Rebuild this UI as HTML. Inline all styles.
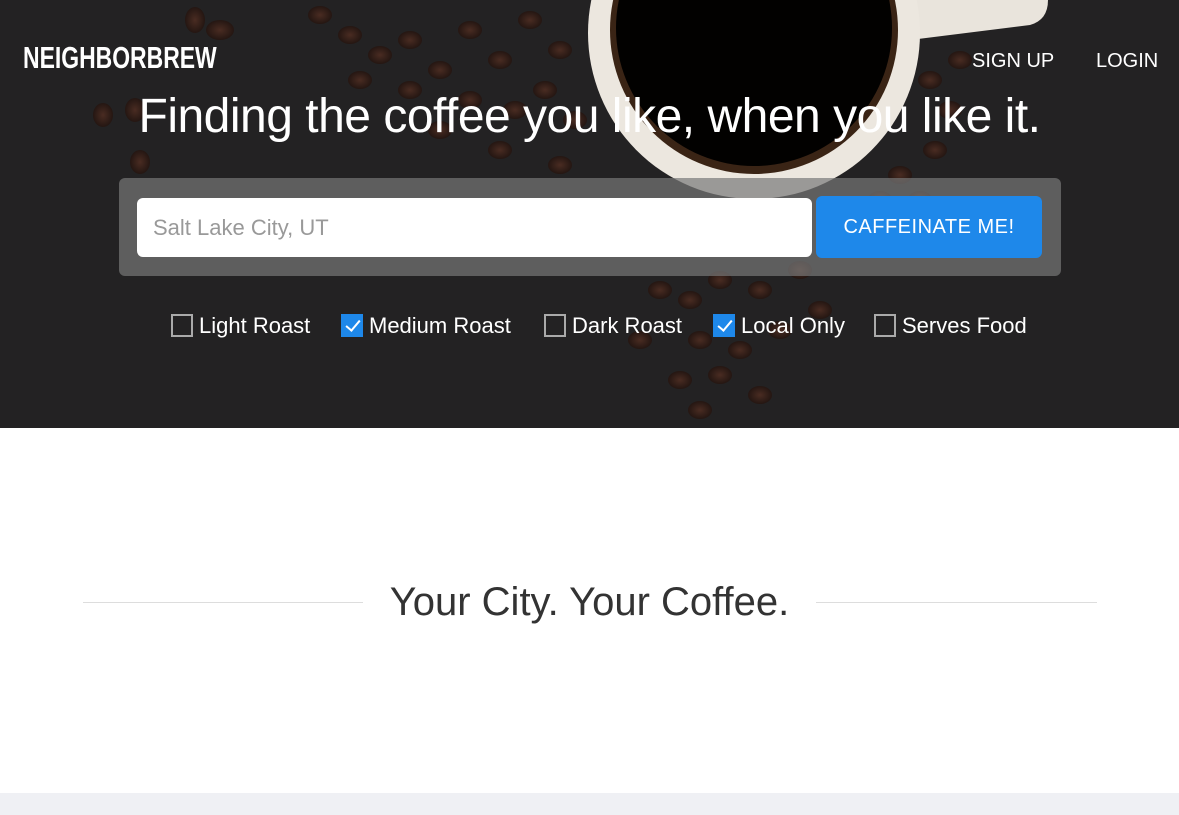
<!DOCTYPE html>
<html><head><meta charset="utf-8"><style>
*{margin:0;padding:0;box-sizing:border-box}
body{width:1179px;height:815px;overflow:hidden;background:#fff;font-family:"Liberation Sans",sans-serif;position:relative}
.hero{position:absolute;left:0;top:0;width:1179px;height:428px;background:#232223;overflow:hidden}
.logo{position:absolute;left:23px;top:40px;color:#fff;font:bold 31px "Liberation Sans Narrow","Liberation Sans",sans-serif;transform:scaleX(.74);transform-origin:left}
.nav{position:absolute;top:50px;color:#fff;font-size:20px}
h1{position:absolute;left:0;width:1179px;top:89px;text-align:center;color:#fff;font-weight:normal;font-size:48px;letter-spacing:-.5px}
.box{position:absolute;left:119px;top:178px;width:942px;height:98px;background:rgba(120,120,120,.7);border-radius:6px}
.inp{position:absolute;left:137px;top:198px;width:675px;height:59px;background:#fff;border-radius:6px;color:#999;font-size:22px;padding:17px 16px;font-weight:300}
.btn{position:absolute;left:816px;top:196px;width:226px;height:62px;background:#1e88ea;border-radius:6px;color:#fff;font-size:20px;text-align:center;line-height:62px;letter-spacing:.5px}
.cb{position:absolute;top:313px;height:24px;color:#fff;font-size:22px;line-height:26px;white-space:nowrap}
.cb i{display:inline-block;width:22px;height:23px;border:2px solid #aaa;vertical-align:-4px;margin-right:6px;position:relative}
.cb i.on{background:#1e88ea;border-color:#1e88ea}
.cb i.on:after{content:"";position:absolute;left:6px;top:1px;width:6px;height:12px;border:solid #fff;border-width:0 2px 2px 0;transform:rotate(40deg)}
.t2{position:absolute;top:580px;left:0;width:1179px;text-align:center;font-size:40px;color:#333;font-weight:300}
.ln{position:absolute;top:602px;height:1px;background:#ddd}
</style></head><body>
<div class="hero">
<svg width="1179" height="428" style="position:absolute;left:0;top:0">
<defs><radialGradient id="b"><stop offset="0" stop-color="#4a2c22"/><stop offset="1" stop-color="#241612"/></radialGradient></defs>
<g fill="url(#b)">
<ellipse cx="220" cy="30" rx="14" ry="10"/><ellipse cx="195" cy="20" rx="10" ry="13"/><ellipse cx="135" cy="110" rx="10" ry="12"/><ellipse cx="103" cy="115" rx="10" ry="12"/><ellipse cx="140" cy="162" rx="10" ry="12"/>
<ellipse cx="320" cy="15" rx="12" ry="9"/><ellipse cx="350" cy="35" rx="12" ry="9"/><ellipse cx="380" cy="55" rx="12" ry="9"/><ellipse cx="410" cy="40" rx="12" ry="9"/><ellipse cx="440" cy="70" rx="12" ry="9"/><ellipse cx="470" cy="30" rx="12" ry="9"/><ellipse cx="500" cy="60" rx="12" ry="9"/><ellipse cx="530" cy="20" rx="12" ry="9"/><ellipse cx="560" cy="50" rx="12" ry="9"/><ellipse cx="545" cy="90" rx="12" ry="9"/><ellipse cx="515" cy="110" rx="12" ry="9"/><ellipse cx="575" cy="120" rx="12" ry="9"/><ellipse cx="470" cy="100" rx="12" ry="9"/><ellipse cx="440" cy="130" rx="12" ry="9"/><ellipse cx="500" cy="150" rx="12" ry="9"/><ellipse cx="560" cy="165" rx="12" ry="9"/><ellipse cx="410" cy="90" rx="12" ry="9"/><ellipse cx="360" cy="80" rx="12" ry="9"/>
<ellipse cx="930" cy="80" rx="12" ry="9"/><ellipse cx="950" cy="110" rx="12" ry="9"/><ellipse cx="935" cy="150" rx="12" ry="9"/><ellipse cx="960" cy="60" rx="12" ry="9"/><ellipse cx="900" cy="175" rx="12" ry="9"/><ellipse cx="880" cy="200" rx="12" ry="9"/><ellipse cx="850" cy="220" rx="12" ry="9"/><ellipse cx="920" cy="200" rx="12" ry="9"/><ellipse cx="800" cy="270" rx="12" ry="9"/><ellipse cx="760" cy="290" rx="12" ry="9"/><ellipse cx="720" cy="280" rx="12" ry="9"/><ellipse cx="690" cy="300" rx="12" ry="9"/><ellipse cx="660" cy="290" rx="12" ry="9"/><ellipse cx="700" cy="340" rx="12" ry="9"/><ellipse cx="740" cy="350" rx="12" ry="9"/><ellipse cx="780" cy="330" rx="12" ry="9"/><ellipse cx="680" cy="380" rx="12" ry="9"/><ellipse cx="720" cy="375" rx="12" ry="9"/><ellipse cx="760" cy="395" rx="12" ry="9"/><ellipse cx="700" cy="410" rx="12" ry="9"/><ellipse cx="820" cy="310" rx="12" ry="9"/><ellipse cx="640" cy="340" rx="12" ry="9"/>
</g>
<path d="M900 0 L1048 0 Q1048 20 1030 25 L910 40 Z" fill="#e9e4dc"/>
<circle cx="754" cy="33" r="166" fill="#ece7df"/>
<circle cx="754" cy="30" r="144" fill="#3a2415"/>
<circle cx="754" cy="28" r="138" fill="#020100"/>
</svg>
<div class="logo">NEIGHBORBREW</div>
<div class="nav" style="left:972px">SIGN UP</div>
<div class="nav" style="left:1096px">LOGIN</div>
<h1>Finding the coffee you like, when you like it.</h1>
<div class="box"></div>
<div class="inp">Salt Lake City, UT</div>
<div class="btn">CAFFEINATE ME!</div>
<div class="cb" style="left:171px"><i></i>Light Roast</div>
<div class="cb" style="left:341px"><i class="on"></i>Medium Roast</div>
<div class="cb" style="left:544px"><i></i>Dark Roast</div>
<div class="cb" style="left:713px"><i class="on"></i>Local Only</div>
<div class="cb" style="left:874px"><i></i>Serves Food</div>
</div>
<div class="ln" style="left:83px;width:280px"></div>
<div class="ln" style="left:816px;width:281px"></div>
<div class="t2">Your City. Your Coffee.</div>
<div style="position:absolute;left:0;top:793px;width:1179px;height:22px;background:#eff0f4"></div>
</body></html>
